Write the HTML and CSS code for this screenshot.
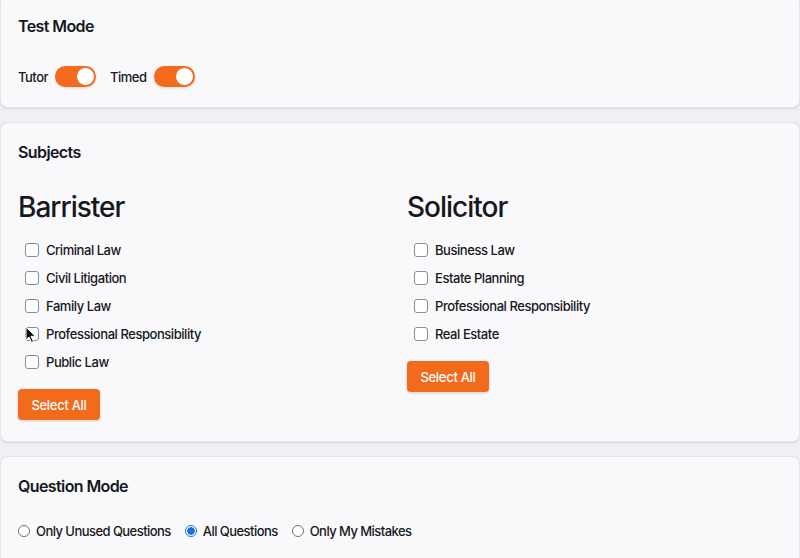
FILE: index.html
```html
<!DOCTYPE html>
<html>
<head>
<meta charset="utf-8">
<link rel="stylesheet" href="styles.css">
</head>
<body>
<div class="page">
  <section class="card card-mode">
    <h3 class="card-title">Test Mode</h3>
    <div class="toggles">
      <label class="toggle-item"><span>Tutor</span><span class="switch"><span class="knob"></span></span></label>
      <label class="toggle-item"><span>Timed</span><span class="switch"><span class="knob"></span></span></label>
    </div>
  </section>

  <section class="card card-subjects">
    <h3 class="card-title">Subjects</h3>
    <div class="columns">
      <div class="column">
        <h2 class="group-title">Barrister</h2>
        <ul class="checks">
          <li><span class="box"></span>Criminal Law</li>
          <li><span class="box"></span>Civil Litigation</li>
          <li><span class="box"></span>Family Law</li>
          <li><span class="box"></span>Professional Responsibility<svg class="cursor" width="12" height="18" viewBox="0 0 12 18"><path d="M1 1 L1 14 L4 11 L6.5 16.5 L8.5 15.6 L6 10.3 L10.3 10.3 Z" fill="#111" stroke="#fff" stroke-width="1"/></svg></li>
          <li><span class="box"></span>Public Law</li>
        </ul>
        <button class="btn">Select All</button>
      </div>
      <div class="column">
        <h2 class="group-title">Solicitor</h2>
        <ul class="checks">
          <li><span class="box"></span>Business Law</li>
          <li><span class="box"></span>Estate Planning</li>
          <li><span class="box"></span>Professional Responsibility</li>
          <li><span class="box"></span>Real Estate</li>
        </ul>
        <button class="btn">Select All</button>
      </div>
    </div>
  </section>

  <section class="card card-question">
    <h3 class="card-title">Question Mode</h3>
    <div class="radios">
      <label class="radio-item"><span class="radio"></span>Only Unused Questions</label>
      <label class="radio-item"><span class="radio checked"></span>All Questions</label>
      <label class="radio-item"><span class="radio"></span>Only My Mistakes</label>
    </div>
  </section>
</div>
</body>
</html>
```

FILE: styles.css
```css
* { box-sizing: border-box; }
html, body { margin: 0; padding: 0; }
body {
  background: #eef0f3;
  font-family: Inter, "Noto Sans", sans-serif;
  color: #16181d;
  overflow: hidden;
}
.page {
  margin-top: -4px;
  display: flex;
  flex-direction: column;
  gap: 14px;
}
.card {
  background: #f9f9fb;
  border: 1px solid #e4e6ea;
  border-radius: 8px;
  box-shadow: 0 1px 2px rgba(0,0,0,0.10);
  padding: 17px 17px 20px;
}
.card-subjects { padding-bottom: 21px; }
.card-title {
  margin: 0;
  font-size: 16px;
  line-height: 24px;
  font-weight: 600;
  letter-spacing: -0.6px;
}
.toggles {
  margin-top: 28px;
  display: flex;
  gap: 14px;
  align-items: center;
}
.toggle-item {
  display: flex;
  align-items: center;
  gap: 7px;
  font-size: 13px;
  font-weight: 500;
  letter-spacing: -0.5px;
}
.switch {
  width: 41px;
  height: 21px;
  border-radius: 11px;
  background: #f26a1b;
  display: flex;
  align-items: center;
  justify-content: flex-end;
  padding-right: 1px;
  box-shadow: 0 1px 3px rgba(0,0,0,0.15);
}
.knob {
  width: 19px;
  height: 19px;
  border-radius: 50%;
  background: #fff;
  border: 1.5px solid #f26a1b;
}
.columns {
  display: grid;
  grid-template-columns: 1fr 1fr;
  column-gap: 14px;
}
.group-title {
  margin: 25px 0 0;
  font-size: 28px;
  line-height: 36px;
  font-weight: 500;
  letter-spacing: -1px;
}
.checks {
  list-style: none;
  margin: 11px 0 0;
  padding: 0 0 0 7px;
}
.checks li {
  position: relative;
  height: 28px;
  display: flex;
  align-items: center;
  gap: 7px;
  font-size: 13px;
  font-weight: 500;
  letter-spacing: -0.45px;
}
.box {
  width: 14px;
  height: 14px;
  border: 1.5px solid #8a8d93;
  border-radius: 3px;
  background: #fff;
}
.cursor {
  position: absolute;
  left: 0;
  top: 6px;
}
.btn {
  margin-top: 13px;
  width: 82px;
  height: 31px;
  border: none;
  border-radius: 4px;
  background: #f26a1b;
  color: #fff;
  font-family: inherit;
  font-size: 13px;
  font-weight: 500;
  letter-spacing: -0.3px;
  box-shadow: 0 1px 3px rgba(0,0,0,0.18);
}
.card-question { padding-bottom: 30px; }
.radios {
  margin-top: 25px;
  display: flex;
  align-items: center;
  gap: 14px;
}
.radio-item {
  display: flex;
  align-items: center;
  gap: 6px;
  font-size: 13px;
  font-weight: 500;
  letter-spacing: -0.55px;
}
.radio {
  width: 12px;
  height: 12px;
  border-radius: 50%;
  border: 1px solid #6f7277;
  background: #fff;
}
.radio.checked {
  border: 1px solid #1a6fe0;
  background: radial-gradient(circle, #1a6fe0 0 3.5px, #fff 4px);
}
```
